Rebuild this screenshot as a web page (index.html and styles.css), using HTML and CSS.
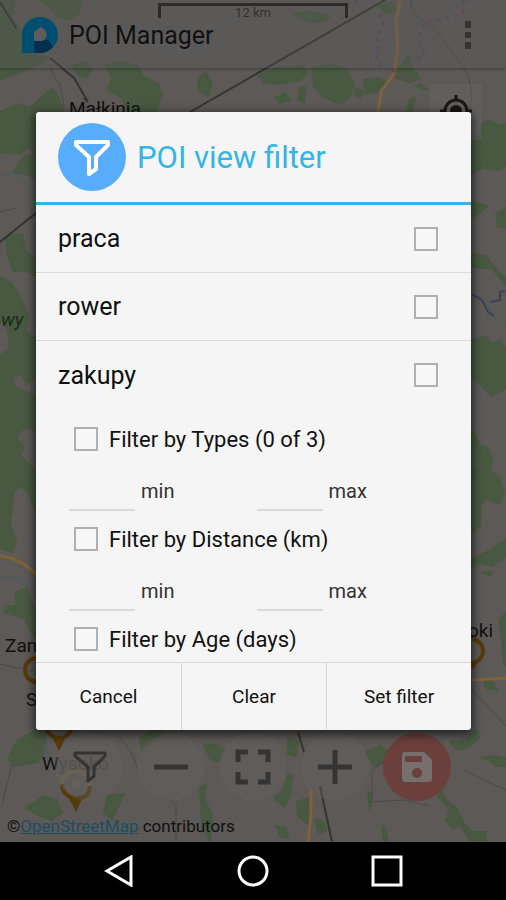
FILE: index.html
```
<!DOCTYPE html>
<html lang="en">
<head>
  <meta charset="UTF-8" />
  <meta name="viewport" content="width=device-width, initial-scale=1" />
  <title>POI Manager</title>
  <link rel="stylesheet" href="styles.css">
</head>

<body>
  <main class="stage">
    <!-- Map -->
    <svg class="map" viewBox="0 0 506 842" preserveAspectRatio="xMidYMid slice" aria-hidden="true">
      <g class="forest">
        <path d="M0 0H15L12 18L22 34V52L48 57L40 64L0 80Z" />
        <path d="M38 0L52 8L56 16L68 20L78 14L82 4L76 0Z" />
        <path d="M0 112L18 104L30 108L52 88L58 96L64 112H36V150L28 148L20 154L0 152Z" />
        <path d="M72 66L84 62L92 70L86 78L78 74Z" />
        <path d="M106 66L118 62L138 66L142 76L158 84L162 96L156 112H128L122 98L108 90L112 78Z" />
        <path d="M198 78L206 72L212 84L208 96L198 90Z" />
        <path d="M294 14L308 12L330 16L324 21L308 22Z" />
        <path d="M378 6L390 3L396 9L386 13Z" />
        <path d="M258 76L276 68L300 66L308 72L300 80L280 84L264 82Z" />
        <path d="M312 68L330 64L346 70L354 84L350 96L340 104L322 96L314 86Z" />
        <path d="M276 98L284 93L290 100L280 103ZM300 88L306 86L304 102L298 100ZM356 88L364 92L360 98L355 94Z" />
        <path d="M364 80L378 78L386 82L376 92L366 94ZM392 76L402 66L408 54L412 68L420 78L410 82ZM410 100L415 98L412 112H407ZM428 90L420 84L416 86Z" />
        <path d="M22 158L36 154V178L26 174L14 172Z" />
        <path d="M6 236L22 234L26 252L36 260V276L24 270L14 272L8 256Z" />
        <path d="M0 276L12 284L20 296L28 316L26 332L36 338V378L26 384L22 374L12 376L16 388L36 396V430L24 428L16 438L24 446L20 456L36 470V512L28 492L22 486L14 490L10 524L16 540L12 552L0 548V356L10 348L6 320L0 322Z" />
        <path d="M16 592L26 588L36 612V640L24 618L4 612L6 606H16Z" />
        <path d="M472 140L480 136L482 124L490 120L500 126L506 124V166L498 170L482 168L472 174Z" />
        <path d="M472 202L488 206L480 212L472 218ZM472 254L486 256L498 272L506 278V286L492 268L480 268L472 266Z" />
        <path d="M506 208L496 214L498 226L506 228ZM472 342L484 336L492 344L500 340L506 350V388L492 396L472 376Z" />
        <path d="M472 430L480 446L488 448L492 458L490 470L500 480L504 494L498 504L486 498L480 506V526L472 532Z" />
        <path d="M472 560L486 552L506 540V556L492 566L480 562L472 568ZM482 572L492 572L490 576ZM506 612L500 620L504 664L506 665ZM484 682L490 680L498 690L486 688Z" />
        <path d="M18 740L36 730H46L44 752L38 762L14 766L8 758Z" />
        <path d="M26 808L44 796L56 800L62 812L52 820L36 814ZM104 812L108 796L124 794L118 806L112 820ZM140 738L152 730H164L156 738L142 750Z" />
        <path d="M204 746L216 744L224 750L218 762L210 758ZM200 788L206 784L204 798L212 816L210 842L202 822Z" />
        <path d="M288 738L298 742L296 756L288 754ZM288 774L292 776L290 796L284 806L274 798L284 790ZM297 802L308 798L312 814L308 824L298 816ZM316 820L324 822L326 830L318 834ZM276 826L286 828L288 838L280 836Z" />
        <path d="M366 752L380 746L388 752L384 762L374 766ZM368 792L372 794L370 810ZM382 826L386 830L388 842H384Z" />
        <path d="M450 742L466 740L476 730L480 736L470 746L458 750ZM480 758L492 756L506 758V766L496 766L490 760Z" />
        <path d="M434 766L440 784L444 798L456 808L464 824L472 832H486V842H472L460 826L452 828L446 820L450 810L438 796Z" />
      </g>

      <g class="stream">
        <path d="M0 176Q14 170 22 180T36 186M0 578Q10 574 22 580T36 574" />
        <path d="M472 298Q486 300 490 310T506 322" />
        <path d="M150 34Q158 50 180 54Q200 50 206 40T236 16" />
        <path d="M40 738Q48 756 60 770T54 800" />
      </g>

      <g class="lane">
        <path d="M50 64Q52 76 60 84M60 84L64 106M410 0Q414 16 424 22T446 44T466 72T470 112" />
        <path d="M0 664L36 672M472 690L506 726M2 806L12 764M150 744L160 728M118 736Q132 748 138 770M164 796L176 804V842" />
        <path d="M372 798V770L384 762M370 802L404 800L430 806M464 770L506 790M0 212L16 208M472 480L480 470" />
      </g>

      <g class="rail">
        <path d="M0 2L16 28M50 58L74 78L88 102L84 98M385 0L190 112M36 213L0 242M298 732L304 752M320 786L332 842" />
      </g>

      <g class="road">
        <path d="M400 0L396 22L398 50L394 74L382 90L378 112M0 556Q20 558 36 574M472 680L506 678M311 790V814L308 842" />
      </g>

      <g class="border">
        <path d="M356 0L352 10M380 14L384 26L376 36L378 48L376 60L384 68M464 0L462 14L444 18L426 22L420 30V44L424 52L414 64M392 70L412 80" />
      </g>
      <path class="river" d="M472 294L482 300L488 312L494 316M490 302L500 300V292L505 291" />

      <!-- Map pins -->
      <g class="pin">
        <circle cx="37" cy="670" r="12" />
        <circle cx="471" cy="651" r="12" />
        <circle cx="59" cy="725" r="13" />
        <path d="M62 784Q63 797 76 798T90 786" />
        <path class="tip" d="M53 739H65L59 751ZM69 798L82 799L76 812ZM471 664L478 662L473 670Z" />
      </g>
      <g class="pin pin-faded">
        <path d="M62 784A14 14 0 1 1 90 786" />
        <circle class="tip" cx="76" cy="784" r="4" />
      </g>

      <g class="place">
        <text x="69" y="115">Małkinia</text>
        <text x="5" y="652">Zambrów</text>
        <text x="26" y="706">S</text>
        <text x="468" y="637">oki</text>
        <text x="42" y="770">W<tspan class="covered">ysoko</tspan></text>
        <text class="region" x="1" y="326">wy</text>
      </g>
    </svg>

    <div class="scale">12 km</div>

    <header class="app-bar">
      <svg class="logo" viewBox="0 0 40 40" aria-hidden="true">
        <path fill="#004e70" d="M2 38V19A18 18 0 1 1 20 38Z" />
        <path fill="#052f4f" d="M14 25L28 25L33 32Q27 38 20 38H14Z" />
        <path fill="#5f5c5a" d="M21 12L25 15A7 7 0 0 1 22 26H14V17L18 14Z" />
      </svg>
      <h1 class="app-title">POI Manager</h1>
      <button class="more" type="button" aria-label="More options">
        <svg viewBox="0 0 8 28" width="8" height="28"><path d="M1 0H7V7H1ZM1 11H7V17H1ZM1 21H7V28H1Z" /></svg>
      </button>
    </header>

    <button class="locate" type="button" aria-label="My location">
      <svg viewBox="0 0 32 32" width="32" height="32">
        <circle cx="16" cy="16" r="11" fill="none" stroke="#171717" stroke-width="3" />
        <circle cx="16" cy="16" r="6" fill="#171717" />
        <path d="M16 0V6M0 16H6M26 16H32M16 26V32" stroke="#171717" stroke-width="3" />
      </svg>
    </button>

    <div class="map-controls">
      <div class="toolbar">
        <button class="tool" type="button" aria-label="Filter">
          <svg viewBox="0 0 36 36" width="36" height="36"><path d="M4 4H34V7L23 18V27L17 32V18L4 7Z" fill="none" stroke="#343434" stroke-width="3" stroke-linejoin="round" /></svg>
        </button>
        <button class="tool" type="button" aria-label="Zoom out">
          <svg viewBox="0 0 36 36" width="36" height="36"><path d="M1 18H35" stroke="#343434" stroke-width="5" /></svg>
        </button>
        <button class="tool" type="button" aria-label="Fit to screen">
          <svg viewBox="0 0 36 36" width="36" height="36"><path d="M3 13V3H13M23 3H33V13M33 23V33H23M13 33H3V23" fill="none" stroke="#343434" stroke-width="5" /></svg>
        </button>
        <button class="tool" type="button" aria-label="Zoom in">
          <svg viewBox="0 0 36 36" width="36" height="36"><path d="M1 18H35M18 1V35" stroke="#343434" stroke-width="5" /></svg>
        </button>
        <button class="tool tool-save" type="button" aria-label="Save">
          <svg viewBox="0 0 36 36" width="36" height="36">
            <path fill="#75706b" fill-rule="evenodd" d="M6 3H25L33 11V30Q33 33 30 33H6Q3 33 3 30V6Q3 3 6 3ZM6 7V13H23V7ZM18 19A5 5 0 1 0 18 29A5 5 0 1 0 18 19Z" />
          </svg>
        </button>
      </div>
      <p class="credit">©<a href="#">OpenStreetMap</a> contributors</p>
    </div>

    <!-- Filter dialog -->
    <div class="overlay">
      <form class="dialog" role="dialog" aria-labelledby="dialogTitle">
        <div class="dialog-head">
          <svg class="badge" viewBox="0 0 68 68" width="68" height="68" aria-hidden="true">
            <circle cx="34" cy="34" r="34" fill="#57adfc" />
            <path d="M18 19H50V22L38 34V46L31 51V34L18 22Z" fill="none" stroke="#fff" stroke-width="4" stroke-linejoin="round" />
          </svg>
          <h2 class="dialog-title" id="dialogTitle">POI view filter</h2>
        </div>

        <div class="dialog-body">
          <label class="type-row">praca <input class="check" type="checkbox" /></label>
          <label class="type-row">rower <input class="check" type="checkbox" /></label>
          <label class="type-row">zakupy <input class="check" type="checkbox" /></label>

          <div class="filters">
            <label class="filter-row"><input class="check" type="checkbox" /> Filter by Types (0 of 3)</label>
            <div class="range-row">
              <label class="range"><input class="field" type="text" /> min</label>
              <label class="range"><input class="field" type="text" /> max</label>
            </div>
            <label class="filter-row"><input class="check" type="checkbox" /> Filter by Distance (km)</label>
            <div class="range-row">
              <label class="range"><input class="field" type="text" /> min</label>
              <label class="range"><input class="field" type="text" /> max</label>
            </div>
            <label class="filter-row"><input class="check" type="checkbox" /> Filter by Age (days)</label>
          </div>
        </div>

        <div class="dialog-actions">
          <button class="action" type="button">Cancel</button>
          <button class="action" type="button">Clear</button>
          <button class="action" type="button">Set filter</button>
        </div>
      </form>
    </div>
  </main>

  <!-- System navigation -->
  <nav class="nav-bar">
    <button class="nav-key" type="button" aria-label="Back">
      <svg viewBox="0 0 32 32" width="32" height="32"><path d="M28 2V30L4 16Z" /></svg>
    </button>
    <button class="nav-key" type="button" aria-label="Home">
      <svg viewBox="0 0 32 32" width="32" height="32"><circle cx="16" cy="16" r="14" /></svg>
    </button>
    <button class="nav-key" type="button" aria-label="Recent apps">
      <svg viewBox="0 0 32 32" width="32" height="32"><path d="M2 2H30V30H2Z" /></svg>
    </button>
  </nav>
</body>
</html>
```
FILE: styles.css
```
* {
  margin: 0;
  padding: 0;
  box-sizing: border-box;
}

body {
  font-family: Roboto, sans-serif;
  background-color: #000;
  color: #111;
  height: 100vh;
  display: flex;
  flex-direction: column;
}

button {
  font-family: inherit;
  border: none;
  background: none;
  cursor: pointer;
}

.stage {
  flex: 1;
  min-height: 0;
  position: relative;
  display: flex;
  flex-direction: column;
  overflow: hidden;
  background-color: #5c5957;
}

/* Map */
.map {
  position: absolute;
  inset: 0;
  width: 100%;
  height: 100%;
}

.forest {
  fill: #485841;
  stroke: #485841;
  stroke-width: 2;
  stroke-linejoin: round;
}

.stream,
.lane,
.rail,
.road,
.border,
.river {
  fill: none;
}

.stream {
  stroke: #4e5c5e;
  stroke-width: 2;
}

.lane {
  stroke: #4c4a48;
}

.rail {
  stroke: #353433;
  stroke-width: 2;
}

.road {
  stroke: #80613a;
  stroke-width: 3;
}

.border {
  stroke: #62465f;
  stroke-width: 3;
  stroke-dasharray: 4 5;
}

.river {
  stroke: #3f4058;
  stroke-width: 2;
}

.pin {
  fill: none;
  stroke: #553a0c;
  stroke-width: 4;
}

.pin .tip {
  fill: #553a0c;
  stroke: none;
}

.pin-faded {
  stroke: #6a6250;
}

.pin-faded .tip {
  fill: #6a6250;
}

.place {
  font-size: 19px;
  fill: #111;
}

.place .covered {
  fill: #464443;
}

.place .region {
  fill: #1c2b1c;
  font-style: italic;
}

.scale {
  position: absolute;
  top: 3px;
  left: 50%;
  transform: translateX(-50%);
  width: 190px;
  height: 15px;
  border: 3px solid #171717;
  border-bottom: none;
  font-size: 13px;
  line-height: 13px;
  text-align: center;
  color: #222;
}

/* App bar */
.app-bar {
  position: relative;
  display: flex;
  align-items: center;
  gap: 9px;
  height: 68px;
  padding: 2px 32px 0 20px;
  background-color: rgba(90, 90, 90, 0.3);
  box-shadow: 0 1px 3px rgba(0, 0, 0, 0.3);
}

.logo {
  width: 40px;
  height: 40px;
}

.app-title {
  flex: 1;
  font-size: 25px;
  font-weight: 400;
}

.more {
  width: 12px;
  height: 28px;
}

.more svg {
  fill: #353433;
}

.locate {
  position: absolute;
  top: 84px;
  right: 24px;
  width: 52px;
  height: 56px;
  background-color: rgba(110, 110, 110, 0.3);
}

/* Map buttons and credit */
.map-controls {
  position: relative;
  margin-top: auto;
  padding-bottom: 5px;
}

.toolbar {
  display: flex;
  justify-content: center;
  gap: 14px;
}

.tool {
  display: grid;
  place-items: center;
  width: 68px;
  height: 68px;
  border-radius: 50%;
  background-color: rgba(100, 98, 96, 0.4);
}

.tool-save {
  background-color: #6b3f3b;
}

.credit {
  margin-top: 14px;
  padding-left: 7px;
  font-size: 17px;
  line-height: 22px;
}

.credit a {
  color: #1d4d63;
}

/* Dialog */
.overlay {
  position: absolute;
  inset: 0;
  display: grid;
  place-items: center;
  padding: 112px 35px 112px 36px;
}

.dialog {
  display: flex;
  flex-direction: column;
  width: 100%;
  max-width: 560px;
  max-height: 100%;
  min-height: 0;
  border-radius: 3px;
  background-color: #f5f5f5;
  box-shadow: 0 3px 10px 2px rgba(0, 0, 0, 0.6);
  overflow: hidden;
}

.dialog-head {
  flex: none;
  display: flex;
  align-items: center;
  gap: 11px;
  padding: 11px 22px;
  border-bottom: 3px solid #33b5e5;
}

.dialog-title {
  font-size: 31px;
  font-weight: 400;
  color: #33b5e5;
}

.dialog-body {
  flex: 1;
  min-height: 0;
  overflow-y: auto;
  scrollbar-width: none;
}

.type-row {
  display: flex;
  align-items: center;
  justify-content: space-between;
  height: 68px;
  padding: 0 33px 0 22px;
  border-bottom: 1px solid #dcdcdc;
  font-size: 25px;
}

.type-row:nth-child(3) {
  border-bottom: none;
}

.check {
  appearance: none;
  flex: none;
  width: 24px;
  height: 24px;
  border: 2px solid #b0b0b0;
  background-color: #f7f7f7;
}

.check:checked {
  background-color: #33b5e5;
}

.filters {
  padding: 5px 33px 0;
}

.filter-row {
  display: flex;
  align-items: center;
  gap: 11px;
  height: 50px;
  padding-left: 5px;
  font-size: 22px;
}

.range-row {
  display: grid;
  grid-template-columns: 1fr 1fr;
  column-gap: 6px;
  height: 50px;
}

.range {
  display: flex;
  align-items: center;
  gap: 6px;
  padding-top: 4px;
  font-size: 20px;
  color: #333;
}

.field {
  width: 66px;
  height: 40px;
  padding: 0 4px;
  border: none;
  border-bottom: 2px solid #dadada;
  background: none;
  font-family: inherit;
  font-size: 20px;
}

.dialog-actions {
  flex: none;
  display: grid;
  grid-template-columns: repeat(3, 1fr);
  border-top: 1px solid #d6d6d6;
}

.action {
  height: 67px;
  font-size: 19px;
  color: #111;
}

.action + .action {
  border-left: 1px solid #d6d6d6;
}

/* System navigation */
.nav-bar {
  flex: none;
  display: flex;
  justify-content: center;
  align-items: center;
  gap: 102px;
  height: 58px;
}

.nav-key {
  width: 32px;
  height: 32px;
}

.nav-key svg {
  display: block;
  fill: none;
  stroke: #fff;
  stroke-width: 3;
}
```
